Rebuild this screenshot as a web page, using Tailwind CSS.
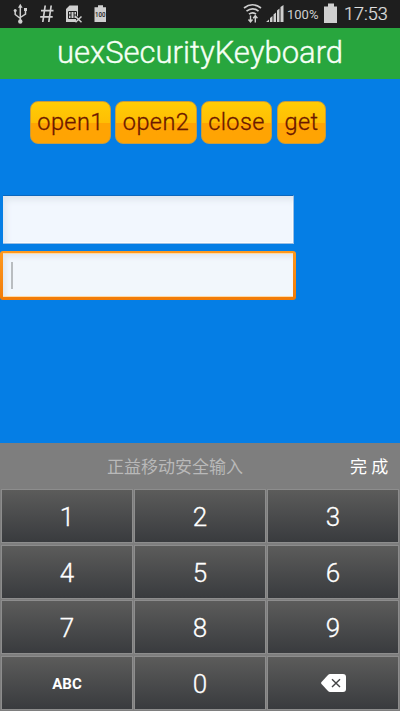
<!DOCTYPE html>
<html lang="zh">
<head>
<meta charset="utf-8">
<title>uexSecurityKeyboard</title>
<script src="https://cdn.jsdelivr.net/npm/@tailwindcss/browser@4"></script>
</head>
<body class="w-[400px] h-[711px] overflow-hidden bg-[#057ee5] font-[Roboto,'Noto_Sans_CJK_SC',sans-serif] flex flex-col">
<header class="h-7 shrink-0 bg-[#1e1e1e] flex items-start text-[#cfcfcf]">
  <svg class="w-[120px] h-7" viewBox="0 0 120 28" fill="none" stroke="#cfcfcf" stroke-width="1.5">
    <path d="M20.300 7v14M15.200 11v3.500l5.100 4M25.500 10v4l-5.200 3.500"/>
    <path d="M20.300 3.800l2.300 4h-4.600z" fill="#cfcfcf" stroke="none"/>
    <circle cx="20.300" cy="21.500" r="2.200" fill="#cfcfcf" stroke="none"/><circle cx="15.200" cy="10.600" r="1.500" fill="#cfcfcf" stroke="none"/><path d="M24 8h3v3h-3z" fill="#cfcfcf" stroke="none"/>
    <path d="M45.200 5.500l-2.400 16.500M51.200 5.500l-2.400 16.500M41 10.700h12.500M40.200 16.800h12.500" stroke-width="1.700"/>
    <path d="M69.500 5.500h8.500v10.500l-2 1.500v4.500H66V9z" fill="#cfcfcf" stroke="none"/>
    <path d="M68.500 11.500h8v7h-8zM71 11.500v7M74 11.500v7M68.500 15h2.500M74 15h2.500" stroke="#1e1e1e" stroke-width="1"/>
    <path d="M75.500 16.500l6 5.800M81.500 16.500l-6 5.800" stroke-width="1.500"/>
    <path d="M98 5.200h5v2h3V22H94.500V7.200H98z" fill="#cfcfcf" stroke="none"/>
    <text x="100.300" y="17" text-anchor="middle" fill="#222" stroke="none" font-family="Roboto" font-weight="500" font-size="6.500" textLength="10.500" lengthAdjust="spacingAndGlyphs">100</text>
  </svg>
  <svg class="w-[47px] h-7 ml-[121px]" viewBox="241 0 47 28" fill="none" stroke="#cfcfcf" stroke-width="1.700">
    <path d="M244 8q8.400-6.500 17 0M246.500 11.200q6-4.800 12 0M249 14.200q3.500-2.800 7 0"/>
    <path d="M250.500 15.500v6.500M248.500 19.500l2 2.400 2-2.400M255.300 22.500V16M253.200 18.200l2.100-2.500 2.100 2.500" stroke-width="1.400"/>
    <path d="M266 22l3-2.500V22zM270 22v-4l2.500-2v6zM273.500 22v-7.500l2.500-2V22zM277 22V10.500l2.500-2V22zM280.500 22V7l3-2V22z" fill="#cfcfcf" stroke="none"/>
  </svg>
  <span class="ml-[-1px] mt-[6px] w-[33px] whitespace-nowrap text-[13px] leading-[18px]">100%</span>
  <svg class="ml-[3px] w-4 h-7" viewBox="0 0 16 28"><path d="M5 3.500h6v3h3V23H1V6.500h4z" fill="#cfcfcf"/></svg>
  <span class="ml-[5px] mt-[3px] text-[18px] leading-[22px] font-light whitespace-nowrap text-[#e0e0e0] [-webkit-text-stroke:0.2px]">17:53</span>
</header>
<h1 class="h-[51px] shrink-0 bg-[#28a63e] text-center text-[#f5fff5] text-[31px] font-light leading-[50px] whitespace-nowrap [-webkit-text-stroke:0.4px]">uexSecurityKeyboard</h1>
<main class="h-[364px] shrink-0 pt-[22px]">
  <div class="flex gap-[4px] pl-[30px] text-[23.500px] font-light text-[#6b1700] leading-[41px] tracking-[0.4px] [-webkit-text-stroke:0.3px]">
    <button class="w-[81px] h-[43px] rounded-[8px] border border-[#c49b42] bg-linear-to-b from-[#ffcc05] via-[#ffbe04] via-50% to-[#ffa403] to-50%">open1</button>
    <button class="w-[82px] h-[43px] rounded-[8px] border border-[#c49b42] bg-linear-to-b from-[#ffcc05] via-[#ffbe04] via-50% to-[#ffa403] to-50%">open2</button>
    <button class="w-[71px] h-[43px] rounded-[8px] border border-[#c49b42] bg-linear-to-b from-[#ffcc05] via-[#ffbe04] via-50% to-[#ffa403] to-50%">close</button>
    <button class="w-[49px] h-[43px] ml-px rounded-[8px] border border-[#c49b42] bg-linear-to-b from-[#ffcc05] via-[#ffbe04] via-50% to-[#ffa403] to-50%">get</button>
  </div>
  <div class="mt-[51px] ml-[3px] w-[291px] h-[49px] bg-[#f2f7fe] border-t border-t-[#0b67bd] border-b border-b-[#9abfe6] border-r border-r-[#9abfe6] shadow-[inset_3px_4px_6px_#dfe6ee,inset_-1px_-1px_0_#fff]"></div>
  <div class="mt-[7px] w-[296px] h-[49px] rounded-[3px] bg-linear-to-b from-[#ff991d] to-[#f17b08] p-[3px] pt-[2px]">
    <div class="h-[44px] bg-[#f2f7fc] border-y border-y-[#ffdaa5] shadow-[inset_3px_3px_5px_#dfe6ee] pl-[8px] pt-[8px]"><div class="w-[2px] h-[27px] bg-[#b9bdc0]"></div></div>
  </div>
</main>
<section class="h-[268px] shrink-0 bg-[#7e7e7e]">
  <div class="h-[47px] flex items-center text-[17px] leading-6 whitespace-nowrap">
    <span class="ml-[107px] text-[#b9b9b9] w-[137px]">正益移动安全输入</span>
    <span class="ml-[106px] text-white">完 成</span>
  </div>
  <div class="ml-[2px] w-[396px] grid grid-cols-[130px_130px_130px] gap-x-[3px] gap-y-[3.670px] text-white text-[26px] font-light [-webkit-text-stroke:0.3px]">
    <div class="h-[52px] bg-linear-to-b from-[#5c5c5b] to-[#393b3e] outline outline-[#8d8d8d] flex items-center justify-center pt-[3px]">1</div>
    <div class="h-[52px] bg-linear-to-b from-[#5c5c5b] to-[#393b3e] outline outline-[#8d8d8d] flex items-center justify-center pt-[3px]">2</div>
    <div class="h-[52px] bg-linear-to-b from-[#5c5c5b] to-[#393b3e] outline outline-[#8d8d8d] flex items-center justify-center pt-[3px]">3</div>
    <div class="h-[52px] bg-linear-to-b from-[#5c5c5b] to-[#393b3e] outline outline-[#8d8d8d] flex items-center justify-center pt-[3px]">4</div>
    <div class="h-[52px] bg-linear-to-b from-[#5c5c5b] to-[#393b3e] outline outline-[#8d8d8d] flex items-center justify-center pt-[3px]">5</div>
    <div class="h-[52px] bg-linear-to-b from-[#5c5c5b] to-[#393b3e] outline outline-[#8d8d8d] flex items-center justify-center pt-[3px]">6</div>
    <div class="h-[52px] bg-linear-to-b from-[#5c5c5b] to-[#393b3e] outline outline-[#8d8d8d] flex items-center justify-center pt-[3px]">7</div>
    <div class="h-[52px] bg-linear-to-b from-[#5c5c5b] to-[#393b3e] outline outline-[#8d8d8d] flex items-center justify-center pt-[3px]">8</div>
    <div class="h-[52px] bg-linear-to-b from-[#5c5c5b] to-[#393b3e] outline outline-[#8d8d8d] flex items-center justify-center pt-[3px]">9</div>
    <div class="h-[52px] bg-linear-to-b from-[#5c5c5b] to-[#393b3e] outline outline-[#8d8d8d] flex items-center justify-center pt-[3px] text-[15px] font-bold [-webkit-text-stroke:0]">ABC</div>
    <div class="h-[52px] bg-linear-to-b from-[#5c5c5b] to-[#393b3e] outline outline-[#8d8d8d] flex items-center justify-center pt-[3px]">0</div>
    <div class="h-[52px] bg-linear-to-b from-[#5c5c5b] to-[#393b3e] outline outline-[#8d8d8d] flex items-center justify-center">
      <svg class="w-[25px] h-[18px]" viewBox="0 0 25 18"><path d="M9 0h13q3 0 3 3v12q0 3-3 3H9q-1 0-2-1L.5 10q-.8-1 0-2L7 1q1-1 2-1z" fill="#fff"/><path d="M11 5.200l8 7.800M19 5.200l-8 7.800" stroke="#444546" stroke-width="1.400"/></svg>
    </div>
  </div>
</section>
</body>
</html>
